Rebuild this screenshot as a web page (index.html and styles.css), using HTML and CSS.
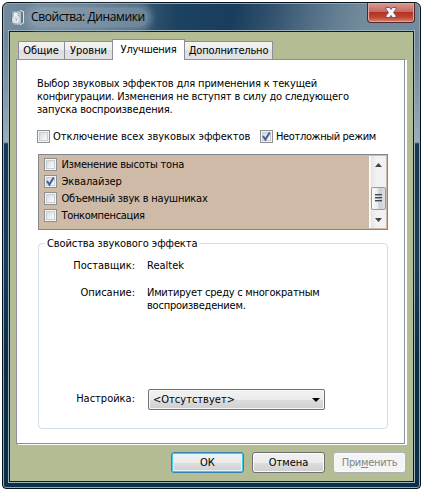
FILE: index.html
```html
<!DOCTYPE html>
<html lang="ru">
<head>
<meta charset="utf-8">
<title>Свойства: Динамики</title>
<link rel="stylesheet" href="styles.css">
</head>
<body>
<div class="window">
  <header class="titlebar">
    <svg class="speaker" width="16" height="18" viewBox="0 0 16 18"><path d="M1 4l3-2 7 1v12l-6 1-4-3z" fill="#9eafbc"/><path d="M7 2l4 1v12l-4 1z" fill="#b7c3cc"/><circle cx="5.500" cy="5.500" r="2" fill="#edf2f5"/><circle cx="6" cy="10.500" r="3.800" fill="#dfe7ec"/><path d="M5 9l2 1-1 2" fill="none" stroke="#a5b3be"/><path d="M10 1.500l3.500 1V14L10 16" fill="none" stroke="#e4eaee"/><path d="M12 3v11" stroke="#526b7e"/><path d="M1.500 4v9" stroke="#61788c"/></svg>
    <h1 class="title">Свойства: Динамики</h1>
    <button class="close" aria-label="Закрыть"><svg width="12" height="11" viewBox="0 0 12 11"><path d="M1 .5h3.600L6 2.500 7.400.5H11v1.700L8.500 5.500 11 8.800v1.700H7.400L6 8.500l-1.400 2H1V8.800l2.500-3.300L1 2.200z" fill="#f6f6f8" stroke="#65434c" stroke-width=".8"/></svg></button>
  </header>
  <main class="client">
    <nav class="tabs">
      <div class="tab general">Общие</div><div class="tab levels">Уровни</div><div class="tab active">Улучшения</div><div class="tab advanced">Дополнительно</div>
    </nav>
    <section class="panel">
      <p class="intro"><span class="l1">Выбор звуковых эффектов для применения к текущей</span><br><span class="l2">конфигурации. Изменения не вступят в силу до следующего</span><br><span class="l3">запуска воспроизведения.</span></p>
      <div class="options">
        <div class="check disable"><i class="box"></i><span class="t-off">Отключение всех звуковых эффектов</span></div>
        <div class="check"><i class="box"><svg width="11" height="11" viewBox="0 0 11 11"><path d="M2 5l2.400 3.600L8.700 1.500" fill="none" stroke="#435f9c" stroke-width="2"/></svg></i><span class="t-urgent">Неотложный режим</span></div>
      </div>
      <div class="list">
        <div class="items">
          <div class="check"><i class="box"></i><span class="t1">Изменение высоты тона</span></div>
          <div class="check"><i class="box"><svg width="11" height="11" viewBox="0 0 11 11"><path d="M2 5l2.400 3.600L8.700 1.500" fill="none" stroke="#435f9c" stroke-width="2"/></svg></i><span class="t2">Эквалайзер</span></div>
          <div class="check"><i class="box"></i><span class="t3">Объемный звук в наушниках</span></div>
          <div class="check"><i class="box"></i><span class="t4">Тонкомпенсация</span></div>
        </div>
        <div class="scrollbar">
          <svg width="7" height="4" viewBox="0 0 7 4"><path d="M0 4L3.500 0 7 4z" fill="#444"/></svg>
          <div class="thumb"><i></i><i></i><i></i></div>
          <svg width="7" height="4" viewBox="0 0 7 4"><path d="M0 0h7L3.500 4z" fill="#444"/></svg>
        </div>
      </div>
      <fieldset class="group">
        <legend><span class="t-legend">Свойства звукового эффекта</span></legend>
        <div class="field provider"><span class="label">Поставщик:</span><span>Realtek</span></div>
        <div class="field description"><span class="label">Описание:</span><span><span class="d1">Имитирует среду с многократным</span><br><span class="d2">воспроизведением.</span></span></div>
        <div class="field setting"><span class="label">Настройка:</span><div class="select"><span>&lt;Отсутствует&gt;</span><svg width="8" height="4" viewBox="0 0 8 4"><path d="M0 0h8L4 4z"/></svg></div></div>
      </fieldset>
    </section>
    <footer class="buttons"><button class="button ok">ОК</button><button class="button cancel">Отмена</button><button class="button apply">При<u>м</u>енить</button></footer>
  </main>
</div>
</body>
</html>
```

FILE: styles.css
```css
* { box-sizing: border-box; }
body {
  margin: 0; padding: 2px; background: #fff; color: #000;
  font: 11px/13px "DejaVu Sans Condensed", "DejaVu Sans", sans-serif;
  white-space: nowrap; overflow: hidden;
}
button { font: inherit; margin: 0; }
h1, p { margin: 0; }
.window {
  width: 419px; height: 487px; padding: 0 6px;
  border: 1px solid #06121b; border-radius: 6px 6px 4px 4px;
  box-shadow: inset 0 0 0 1px #91aaba;
  background:
    linear-gradient(105deg, transparent 0 55%, #738b9d 86%) 0 0 / 100% 28px no-repeat,
    linear-gradient(90deg, #758b9d, #5b768b 20%, #1c4261 42%, #173a5a 65%, #3f6079) 0 0 / 100% 28px no-repeat,
    linear-gradient(#647e92 0, #7890a3 70px, #9aaebb 139px, #163955 141px, #183d5b 260px, #0b2c45 360px, #0b3049);
}
.titlebar { display: flex; height: 27px; position: relative; }
.speaker { margin: 6px 0 0 1px; }
.title {
  height: 19px; margin: 5px 0 0 4px; padding: 0 3px 0 1px; border-radius: 9px;
  font: 12px/18px "Open Sans", sans-serif; letter-spacing: -.4px; color: #000;
  background: rgba(154, 173, 187, .55); box-shadow: 0 0 6px 4px rgba(154, 173, 187, .5);
}
.close {
  position: absolute; right: -1px; top: 0; width: 48px; height: 20px; padding: 0 0 1px;
  border: 1px solid #4b2831; border-top: 0; border-radius: 0 0 4px 4px;
  display: flex; align-items: center; justify-content: center;
  box-shadow: inset 0 0 0 1px #dfa7a1;
  background: linear-gradient(#d99a91, #c76a61 45%, #b43225 50%, #c04532 75%, #d98770);
}
.client {
  width: 405px; height: 451px; border: 1px solid #0a1c2a; outline: 1px solid #9db2bf;
  margin-top: 1px; padding: 7px 6px 0; background: #b4bc94;
}
.tabs { display: flex; align-items: flex-end; height: 20px; padding-left: 2px; }
.tab {
  height: 18px; border: 1px solid #8c8e9b; border-bottom: 0; text-align: center;
  line-height: 18px; background: linear-gradient(#f3f3f3, #ececec 48%, #dedede 50%, #e2e2e2);
}
.general { width: 47px; padding-right: 1px; }
.levels { width: 47px; border-left: 0; border-right: 0; }
.active { width: 73px; height: 21px; margin-bottom: -1px; line-height: 19px; letter-spacing: -.25px; background: #fff; z-index: 1; }
.advanced { width: 88px; border-left: 0; letter-spacing: -.2px; }
.panel {
  width: 389px; height: 385px; border: 1px solid #8c8e9b; background: #fff;
  box-shadow: 2px 1px #fff; padding: 17px 16px 0 20px;
}
.intro { height: 53px; }
.l1 { letter-spacing: -.15px; }
.l2 { letter-spacing: -.17px; }
.l3 { letter-spacing: -.14px; }
.t-off { letter-spacing: -.03px; }
.t-urgent { letter-spacing: -.36px; }
.t1, .t3 { letter-spacing: -.22px; }
.t2 { letter-spacing: -.1px; }
.t4 { letter-spacing: -.33px; }
.t-legend { letter-spacing: -.1px; }
.d1 { letter-spacing: -.25px; }
.d2 { letter-spacing: -.22px; }
.options { display: flex; }
.check { display: flex; align-items: center; height: 13px; gap: 3px; }
.disable { width: 223px; }
.box {
  width: 13px; height: 13px; border: 1px solid #8e8f8f; flex: none; display: block;
  background: linear-gradient(135deg, #cbcfd5, #f6f6f6 70%);
  box-shadow: inset 0 0 0 1px #f4f4f4, inset 0 0 0 2px #c8cdd3;
}
.box svg { display: block; }
.list {
  display: flex; justify-content: space-between; width: 350px; height: 76px;
  margin: 11px 0 0 1px; padding: 1px; border: 1px solid #828790; background: #cfbaa7;
}
.items { display: grid; grid-auto-rows: 13px; row-gap: 4px; padding: 2px 0 0 4px; }
.items .check { gap: 4.500px; }
.scrollbar {
  width: 17px; height: 72px; padding: 7px 0 0 1px; display: flex; flex-direction: column;
  align-items: center; background: linear-gradient(90deg, #fff 1px, #e6e6e6 2px, #f3f3f3 8px, #f1f1f1);
}
.scrollbar svg { flex: none; }
.thumb {
  width: 15px; height: 23px; margin: 20px 0 8px; border: 1px solid #969aa3; border-radius: 2px;
  padding: 6px 3px 0; background: linear-gradient(90deg, #fafafa, #e8e9ec 48%, #c8cdd3 52%, #dce0e5);
}
.thumb i { display: block; height: 2px; margin-bottom: 1px; border-top: 1px solid #3e444b; border-bottom: 1px solid #a4a8ae; }
.group {
  width: 350px; height: 192px; margin: 7px 0 0 1px; padding: 0;
  border: 1px solid #d0dce7; border-radius: 4px; min-width: 0;
}
legend { padding: 0 2px; margin-left: 6px; height: 13px; }
.field { display: flex; }
.label { width: 96px; margin-right: 12px; text-align: right; flex: none; }
.provider { margin-top: 9px; }
.description { margin-top: 14px; height: 103px; }
.setting .label { padding-top: 3px; }
.select {
  display: flex; align-items: center; justify-content: space-between; width: 177px; height: 21px;
  margin-left: 1px; padding: 0 4px; border: 1px solid #707070; border-radius: 2px;
  box-shadow: inset 0 0 0 1px #f8f8f8;
  background: linear-gradient(#f2f2f2, #ebebeb 50%, #dddddd 51%, #cfcfcf);
}
.buttons { display: flex; gap: 8px; margin: 8px 0 0 155px; }
.button {
  width: 73px; height: 21px; padding: 0; border: 1px solid #707070; border-radius: 3px; color: #000;
  box-shadow: inset 0 0 0 1px #fafafa;
  background: linear-gradient(#f2f2f2, #ebebeb 50%, #dddddd 51%, #cfcfcf);
}
.ok { border-color: #3c7fb1; box-shadow: inset 0 0 0 1px #48c8ef, inset 0 0 0 2px #dff3fa; }
.apply { border-color: #adb2b5; background: #f4f4f4; color: #838383; letter-spacing: -.3px; }
```
